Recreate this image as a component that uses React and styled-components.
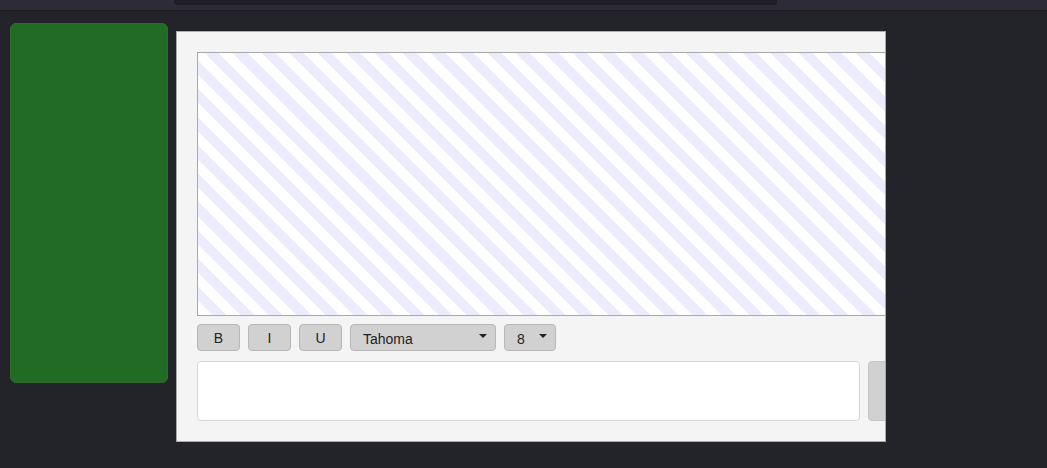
import React from 'react';
import styled, { createGlobalStyle } from 'styled-components';

const Global = createGlobalStyle`
  html, body {
    margin: 0;
    padding: 0;
    background: #222429;
    height: 100%;
  }
  #root {
    height: 100%;
  }
`;

const Page = styled.div`
  width: 1047px;
  height: 468px;
  overflow: hidden;
  background: #222429;
  font-family: 'Liberation Sans', Arial, sans-serif;
`;

const TopBar = styled.div`
  height: 10px;
  background: #2d2c36;
  border-bottom: 1px solid #1b1b1f;
  padding-left: 174px;
`;

const Tab = styled.div`
  width: 603px;
  height: 5px;
  background: #1f1e24;
  border-radius: 0 0 3px 3px;
`;

const Main = styled.div`
  display: flex;
  align-items: flex-start;
  gap: 8px;
  padding: 12px 0 0 10px;
`;

const SidePanel = styled.div`
  width: 156px;
  height: 358px;
  background: #226b24;
  border: 1px solid #2f6a31;
  border-radius: 6px;
`;

const Dialog = styled.div`
  margin-top: 8px;
  width: 688px;
  height: 369px;
  padding: 20px 0 20px 20px;
  background: #f4f4f4;
  border: 1px solid #a9a9a9;
  overflow: hidden;
  display: flex;
  flex-direction: column;
`;

const Canvas = styled.div`
  flex: none;
  width: 720px;
  height: 262px;
  border: 1px solid #a8a8a8;
  background: repeating-linear-gradient(
    45deg,
    #ffffff 0px,
    #ffffff 10px,
    #ececfd 10px,
    #ececfd 20px
  );
`;

const Toolbar = styled.div`
  display: flex;
  gap: 8px;
  margin-top: 8px;
  height: 27px;
`;

const ToolButton = styled.button`
  width: 43px;
  height: 27px;
  padding: 0;
  background: #d1d1d1;
  border: 1px solid #b7b7b7;
  border-radius: 4px;
  font-family: 'Liberation Sans', Arial, sans-serif;
  font-size: 14px;
  color: #222;
`;

const Select = styled.div`
  width: ${p => p.$w}px;
  box-sizing: border-box;
  height: 27px;
  display: flex;
  align-items: center;
  justify-content: space-between;
  padding: 3px 8px 0 12px;
  background: #d1d1d1;
  border: 1px solid #b7b7b7;
  border-radius: 4px;
  font-size: 14px;
  color: #222;
`;

const Caret = styled.span`
  width: 0;
  height: 0;
  margin-bottom: 6px;
  border-left: 4px solid transparent;
  border-right: 4px solid transparent;
  border-top: 4px solid #222;
`;

const InputRow = styled.div`
  display: flex;
  gap: 8px;
  margin-top: 10px;
  height: 60px;
`;

const MessageBox = styled.textarea`
  flex: none;
  width: 663px;
  height: 60px;
  box-sizing: border-box;
  margin: 0;
  background: #fff;
  border: 1px solid #d4d8dc;
  border-radius: 4px;
  resize: none;
`;

const SendButton = styled.button`
  flex: none;
  width: 70px;
  height: 60px;
  background: #d1d1d1;
  border: 1px solid #c4c4c4;
  border-radius: 4px;
`;

export default function App() {
  return (
    <Page>
      <Global />
      <TopBar>
        <Tab />
      </TopBar>
      <Main>
        <SidePanel />
        <Dialog>
          <Canvas />
          <Toolbar>
            <ToolButton>B</ToolButton>
            <ToolButton>I</ToolButton>
            <ToolButton>U</ToolButton>
            <Select $w={146}>
              <span>Tahoma</span>
              <Caret />
            </Select>
            <Select $w={52}>
              <span>8</span>
              <Caret />
            </Select>
          </Toolbar>
          <InputRow>
            <MessageBox />
            <SendButton />
          </InputRow>
        </Dialog>
      </Main>
    </Page>
  );
}
